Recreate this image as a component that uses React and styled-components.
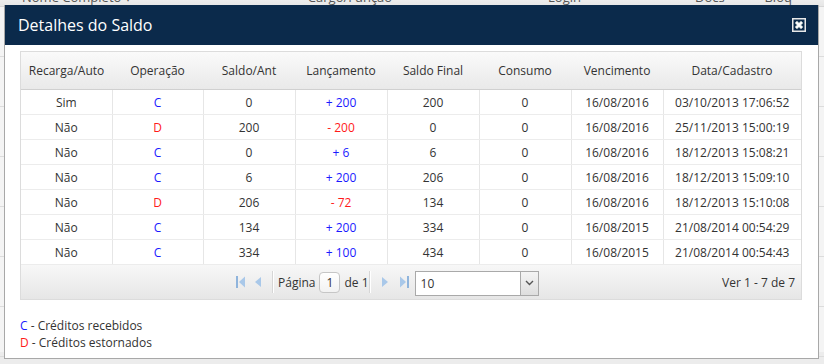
import React from 'react';
import styled, { createGlobalStyle } from 'styled-components';

const GlobalStyle = createGlobalStyle`
  html, body {
    margin: 0;
    padding: 0;
    background: #ececec;
    font-family: "Open Sans", "DejaVu Sans", sans-serif;
  }
  #root {
    width: 824px;
    height: 364px;
    position: relative;
    overflow: hidden;
  }
`;

const rows = [
  { recarga: 'Sim', op: 'C', ant: '0', lanc: '200', fin: '200', cons: '0', venc: '16/08/2016', cad: '03/10/2013 17:06:52' },
  { recarga: 'Não', op: 'D', ant: '200', lanc: '200', fin: '0', cons: '0', venc: '16/08/2016', cad: '25/11/2013 15:00:19' },
  { recarga: 'Não', op: 'C', ant: '0', lanc: '6', fin: '6', cons: '0', venc: '16/08/2016', cad: '18/12/2013 15:08:21' },
  { recarga: 'Não', op: 'C', ant: '6', lanc: '200', fin: '206', cons: '0', venc: '16/08/2016', cad: '18/12/2013 15:09:10' },
  { recarga: 'Não', op: 'D', ant: '206', lanc: '72', fin: '134', cons: '0', venc: '16/08/2016', cad: '18/12/2013 15:10:08' },
  { recarga: 'Não', op: 'C', ant: '134', lanc: '200', fin: '334', cons: '0', venc: '16/08/2015', cad: '21/08/2014 00:54:29' },
  { recarga: 'Não', op: 'C', ant: '334', lanc: '100', fin: '434', cons: '0', venc: '16/08/2015', cad: '21/08/2014 00:54:43' },
];

const columns = ['Recarga/Auto', 'Operação', 'Saldo/Ant', 'Lançamento', 'Saldo Final', 'Consumo', 'Vencimento', 'Data/Cadastro'];
const widths = [91, 91, 92, 92, 92, 92, 92, 138];

const BackPage = styled.div`
  width: 824px;
  height: 364px;
  background: #f4f4f4;
`;

const BackHeader = styled.div`
  display: flex;
  height: 18px;
  margin-top: -12px;
  background: linear-gradient(#fafafa, #e6e6e6);
  border-bottom: 1px solid #d6d6d6;
  font-size: 13px;
  color: #555;
  line-height: 18px;
`;

const BackCol = styled.div`
  width: ${p => p.w}px;
  padding-left: ${p => p.pl || 0}px;
`;

const BackRow = styled.div`
  height: 49px;
  border-bottom: 1px solid #dcdcdc;
`;

const Dialog = styled.div`
  position: absolute;
  left: 4px;
  top: 5px;
  width: 813px;
  height: 353px;
  background: #fff;
  border: 1px solid #a8a8a8;
  border-top: none;
  display: flex;
  flex-direction: column;
`;

const TitleBar = styled.div`
  height: 40px;
  background: #0b2a4b;
  display: flex;
  align-items: center;
  justify-content: space-between;
  padding: 0 12px 0 13px;
`;

const Title = styled.span`
  color: #fff;
  font-size: 16px;
`;

const Body = styled.div`
  padding: 6px 0 0 15px;
`;

const Grid = styled.div`
  width: 780px;
  border: 1px solid #dcdcdc;
`;

const Table = styled.table`
  border-collapse: collapse;
  table-layout: fixed;
  width: 780px;
  font-size: 12px;
  color: #333;
`;

const Th = styled.th`
  height: 37px;
  font-weight: normal;
  text-align: center;
  background: linear-gradient(#fafafa, #e9e9e9);
  border-bottom: 1px solid #d0d0d0;
  padding: 0;
`;

const Td = styled.td`
  height: 24px;
  text-align: center;
  padding: 0;
  border-right: 1px solid #e6e6e6;
  border-bottom: 1px solid #ececec;
  color: ${p => p.color || '#333'};
  &:last-child { border-right: none; }
`;

const Pager = styled.div`
  height: 34px;
  display: flex;
  align-items: center;
  background: linear-gradient(#f7f7f7, #e6e6e6);
  padding: 0 6px 0 215px;
  font-size: 12px;
  color: #333;
`;

const PagerIcon = styled.span`
  display: inline-flex;
  width: ${p => p.w}px;
  margin-right: ${p => p.mr}px;
`;

const Sep = styled.span`
  width: 1px;
  height: 22px;
  background: #d6d6d6;
  border-right: 1px solid #fff;
  margin: 0 ${p => p.mr}px 0 0;
`;

const PageInput = styled.span`
  display: inline-flex;
  align-items: center;
  justify-content: center;
  width: 19px;
  height: 19px;
  border: 1px solid #c6c6c6;
  border-radius: 4px;
  background: linear-gradient(#fff, #f2f2f2);
  margin: 0 4px 0 4px;
`;

const Select = styled.div`
  display: flex;
  width: 122px;
  height: 23px;
  border: 1px solid #a9a9a9;
  background: #fff;
  margin-left: 6px;
  margin-top: 2px;
`;

const SelectValue = styled.span`
  flex: 1;
  padding-left: 5px;
  line-height: 23px;
`;

const SelectButton = styled.span`
  width: 17px;
  border-left: 1px solid #a9a9a9;
  background: linear-gradient(#f4f4f4, #dedede);
  display: flex;
  align-items: center;
  justify-content: center;
`;

const Count = styled.span`
  margin-left: auto;
`;

const Legend = styled.div`
  padding: 17px 0 0 15px;
  font-size: 12px;
  line-height: 17px;
  color: #333;
`;

const Letter = styled.span`
  color: ${p => p.color};
`;

const BLUE = '#1a1aff';
const RED = '#ff1a1a';

const CloseIcon = () => (
  <svg width="14" height="14" viewBox="0 0 14 14">
    <rect x="0.75" y="0.75" width="12.5" height="12.5" fill="none" stroke="#e8e8e8" strokeWidth="1.5" />
    <path d="M4 4 L10 10 M10 4 L4 10" stroke="#9aa" strokeWidth="3.4" />
    <path d="M4 4 L10 10 M10 4 L4 10" stroke="#fff" strokeWidth="2.2" />
  </svg>
);

const FirstIcon = () => (
  <svg width="10" height="12" viewBox="0 0 10 12">
    <rect x="0" y="0" width="2" height="12" fill="#8fb4dc" />
    <path d="M9 0.5 L3 6 L9 11.5 Z" fill="#a9c8e9" />
  </svg>
);
const PrevIcon = () => (
  <svg width="6" height="10" viewBox="0 0 6 10">
    <path d="M6 0 L0 5 L6 10 Z" fill="#a9c8e9" />
  </svg>
);
const NextIcon = () => (
  <svg width="6" height="10" viewBox="0 0 6 10">
    <path d="M0 0 L6 5 L0 10 Z" fill="#a9c8e9" />
  </svg>
);
const LastIcon = () => (
  <svg width="10" height="12" viewBox="0 0 10 12">
    <path d="M1 0.5 L7 6 L1 11.5 Z" fill="#a9c8e9" />
    <rect x="8" y="0" width="2" height="12" fill="#8fb4dc" />
  </svg>
);

const Chevron = () => (
  <svg width="9" height="6" viewBox="0 0 9 6">
    <path d="M1 1 L4.5 4.5 L8 1" fill="none" stroke="#555" strokeWidth="1.4" />
  </svg>
);

export default function App() {
  return (
    <>
      <GlobalStyle />
      <BackPage>
        <BackHeader>
          <BackCol w={288} pl={22}>Nome Completo ▾</BackCol>
          <BackCol w={242} pl={0}>Cargo/Função</BackCol>
          <BackCol w={148} pl={0}>Login</BackCol>
          <BackCol w={70}>Docs</BackCol>
          <BackCol w={60}>Bloq</BackCol>
        </BackHeader>
        {Array.from({ length: 7 }).map((_, i) => <BackRow key={i} />)}
      </BackPage>

      <Dialog>
        <TitleBar>
          <Title>Detalhes do Saldo</Title>
          <CloseIcon />
        </TitleBar>
        <Body>
          <Grid>
            <Table>
              <colgroup>
                {widths.map((w, i) => <col key={i} style={{ width: w }} />)}
              </colgroup>
              <thead>
                <tr>{columns.map(c => <Th key={c}>{c}</Th>)}</tr>
              </thead>
              <tbody>
                {rows.map((r, i) => {
                  const color = r.op === 'C' ? BLUE : RED;
                  return (
                    <tr key={i}>
                      <Td>{r.recarga}</Td>
                      <Td color={color}>{r.op}</Td>
                      <Td>{r.ant}</Td>
                      <Td color={color}>{r.op === 'C' ? '+' : '-'} {r.lanc}</Td>
                      <Td>{r.fin}</Td>
                      <Td>{r.cons}</Td>
                      <Td>{r.venc}</Td>
                      <Td>{r.cad}</Td>
                    </tr>
                  );
                })}
              </tbody>
            </Table>
            <Pager>
              <PagerIcon w={10} mr={9}><FirstIcon /></PagerIcon>
              <PagerIcon w={6} mr={11}><PrevIcon /></PagerIcon>
              <Sep mr={4} />
              <span>Página</span>
              <PageInput>1</PageInput>
              <span>de 1</span>
              <Sep mr={11} />
              <PagerIcon w={6} mr={11}><NextIcon /></PagerIcon>
              <PagerIcon w={10} mr={0}><LastIcon /></PagerIcon>
              <Select>
                <SelectValue>10</SelectValue>
                <SelectButton><Chevron /></SelectButton>
              </Select>
              <Count>Ver 1 - 7 de 7</Count>
            </Pager>
          </Grid>
        </Body>
        <Legend>
          <div><Letter color={BLUE}>C</Letter> - Créditos recebidos</div>
          <div><Letter color={RED}>D</Letter> - Créditos estornados</div>
        </Legend>
      </Dialog>
    </>
  );
}
